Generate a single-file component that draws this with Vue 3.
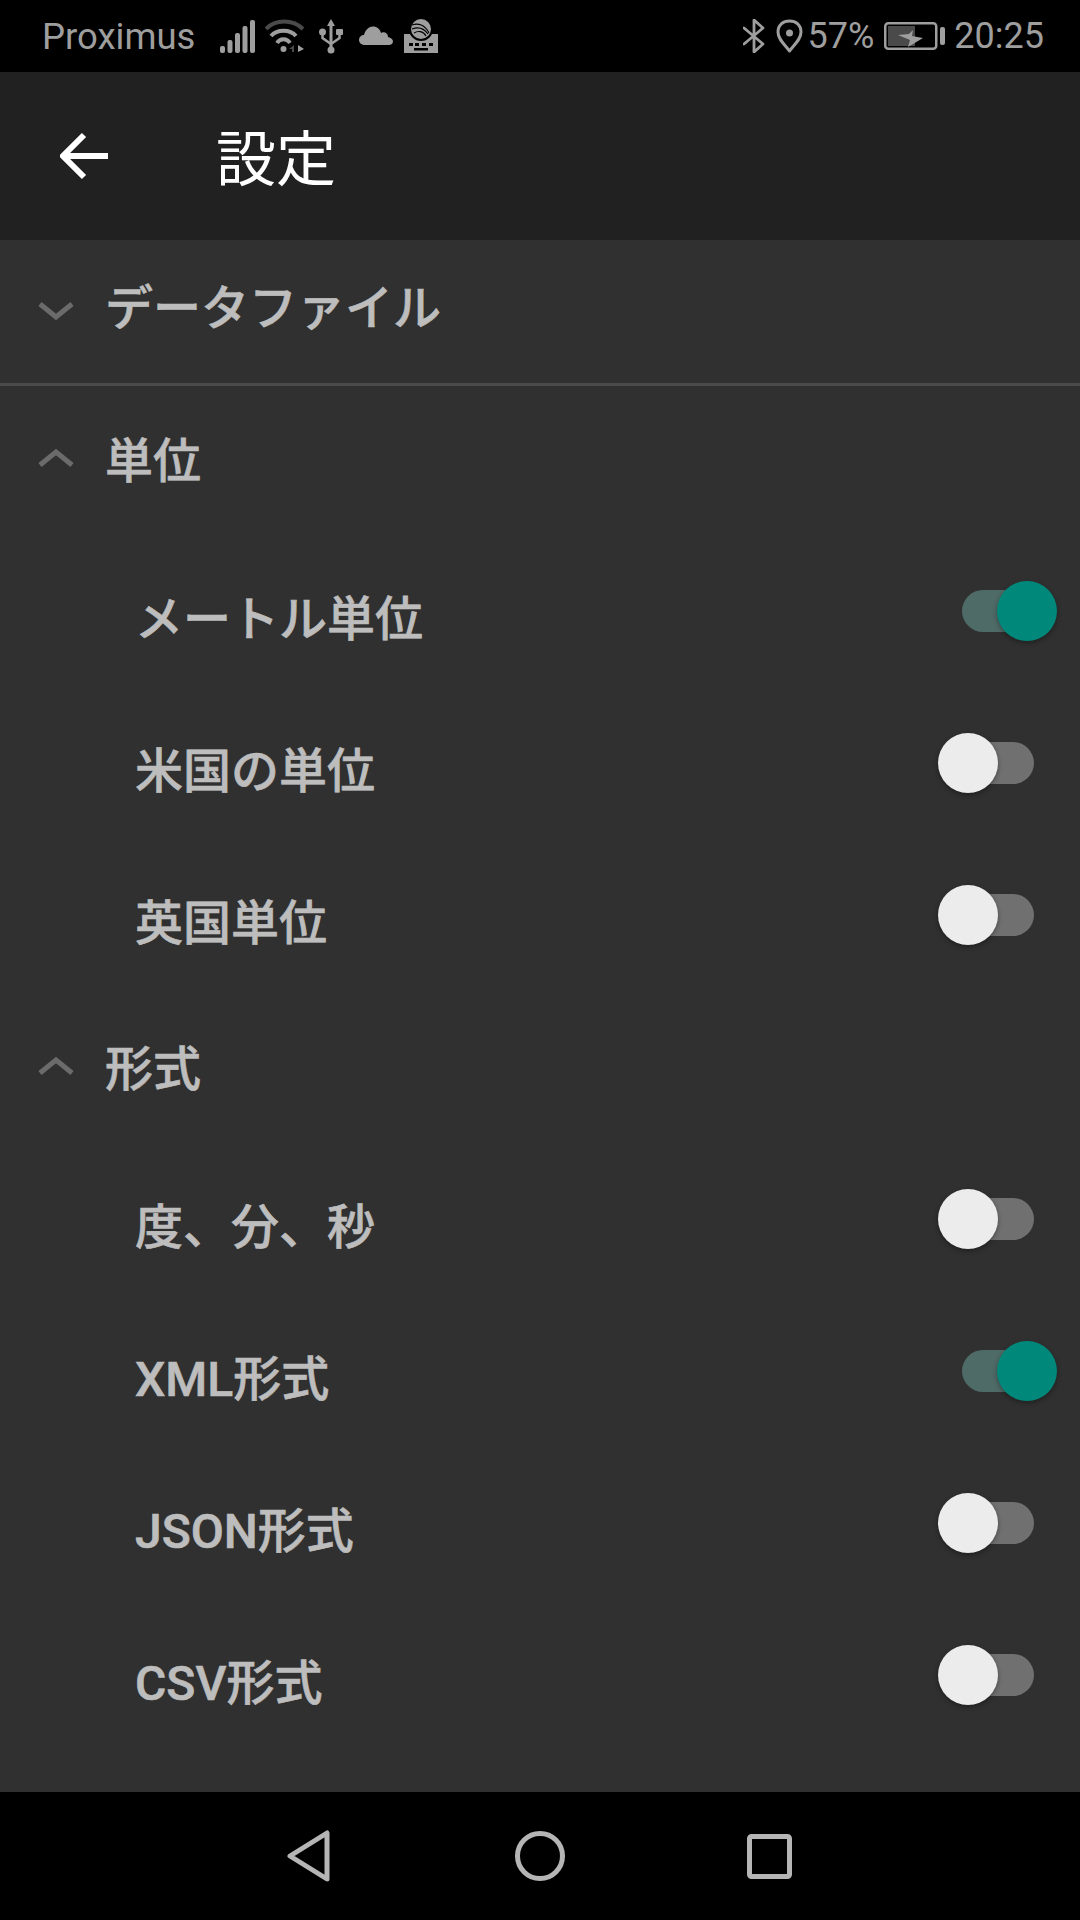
<script setup>
const units = [
  { label: 'メートル単位', on: true },
  { label: '米国の単位', on: false },
  { label: '英国単位', on: false }
]
const formats = [
  { label: '度、分、秒', on: false },
  { label: 'XML形式', on: true },
  { label: 'JSON形式', on: false },
  { label: 'CSV形式', on: false }
]
</script>

<template>
  <div class="screen">
    <div class="status-bar">
      <span class="carrier">Proximus</span>
      <div class="status-icons">
        <svg width="35" height="34" viewBox="0 0 35 34" class="ic-signal">
          <g fill="#9e9e9e">
            <rect x="0" y="27" width="5" height="7" rx="2" />
            <rect x="7.500" y="21" width="5" height="13" rx="2" />
            <rect x="15" y="14" width="5" height="20" rx="2" />
            <rect x="22.500" y="7" width="5" height="27" rx="2" />
            <rect x="30" y="1" width="5" height="33" rx="2" />
          </g>
        </svg>
        <svg width="40" height="34" viewBox="0 0 40 34" class="ic-wifi">
          <path d="M1 10 C10 0 28 0 38 10" fill="none" stroke="#4a4a4a" stroke-width="4" />
          <path d="M6 17 C12 10 25 10 31 17" fill="none" stroke="#9e9e9e" stroke-width="4" />
          <path d="M12 24 C15 19 22 19 25 24" fill="none" stroke="#9e9e9e" stroke-width="4" />
          <circle cx="18.500" cy="30" r="3" fill="#9e9e9e" />
          <path d="M29 26 L29 33 L27 33 L27 30 L24 30 Z" fill="#4a4a4a" />
          <path d="M33 26 L39 30 L33 33 Z" fill="#9e9e9e" />
        </svg>
        <svg width="24" height="35" viewBox="0 0 24 35" class="ic-usb">
          <g fill="#9e9e9e">
            <path d="M12 0 L16 7 L13.500 7 L13.500 30 L10.500 30 L10.500 7 L8 7 Z" />
            <circle cx="12" cy="31" r="3.500" />
            <circle cx="3.500" cy="13" r="3.500" />
            <rect x="17" y="10" width="7" height="6" rx="1" />
          </g>
          <path d="M3.500 14 L3.500 19 L12 25 L20.500 19 L20.500 14" fill="none" stroke="#9e9e9e" stroke-width="2.500" />
        </svg>
        <svg width="34" height="20" viewBox="0 0 34 20" class="ic-cloud">
          <path d="M6 19 C2 19 0 16.500 0 14 C0 11 2.500 9 5 9 C6.500 3.500 10 0.500 14 0.500 C18 0.500 21 3 22 7 C23 6 24.500 6 26 6.500 C28 7.500 29 9 29 11 C32 11.500 34 13.500 34 15.500 C34 17.500 32 19 30 19 Z" fill="#9e9e9e" />
        </svg>
        <svg width="34" height="34" viewBox="0 0 34 34" class="ic-swiftkey">
          <rect x="0" y="15" width="34" height="19" fill="#9e9e9e" />
          <circle cx="17" cy="10" r="12" fill="#000" />
          <circle cx="17" cy="10" r="10" fill="#9e9e9e" />
          <path d="M8 6 C14 3.500 21 6 25 14 M8 10 C14 7.500 20 9.500 24 15 M10 14 C14 11.500 19 12 22 17" fill="none" stroke="#000" stroke-width="1.200" />
          <g fill="#000">
            <rect x="5" y="24" width="4" height="3" />
            <rect x="11" y="24" width="4" height="3" />
            <rect x="18" y="24" width="4" height="3" />
            <rect x="25" y="24" width="4" height="3" />
            <rect x="10" y="29" width="14" height="2.500" />
          </g>
        </svg>
      </div>
      <div class="status-right">
        <svg width="22" height="34" viewBox="0 0 22 34" class="ic-bt">
          <path d="M1 9 L20 25 L11 33 L11 1 L20 9 L1 25" fill="none" stroke="#9e9e9e" stroke-width="2.800" stroke-linejoin="round" stroke-linecap="round" />
        </svg>
        <svg width="27" height="34" viewBox="0 0 27 34" class="ic-pin">
          <path d="M13.500 32 C8 25 2 20 2 13 C2 6 7 2 13.500 2 C20 2 25 6 25 13 C25 20 19 25 13.500 32 Z" fill="none" stroke="#9e9e9e" stroke-width="3" stroke-linejoin="round" />
          <circle cx="13.500" cy="14" r="3.500" fill="#9e9e9e" />
        </svg>
        <span class="pct">57%</span>
        <svg width="61" height="28" viewBox="0 0 61 28" class="ic-battery">
          <rect x="1.250" y="1.250" width="51" height="25.500" rx="3" fill="none" stroke="#9e9e9e" stroke-width="2.500" />
          <rect x="4" y="4" width="27" height="20" fill="#4a4a4a" />
          <path d="M14 13 L25 12 L29 8 L28 14 L39 16 L24 25 L26 18 Z" fill="#9e9e9e" />
          <rect x="56" y="5" width="5" height="18" rx="2" fill="#9e9e9e" />
        </svg>
        <span class="time">20:25</span>
      </div>
    </div>

    <header class="app-bar">
      <svg width="48" height="48" viewBox="0 0 48 48" class="back">
        <path d="M48 24 H4 M24 3 L3 24 L24 45" fill="none" stroke="#fff" stroke-width="6" />
      </svg>
      <h1 class="title">設定</h1>
    </header>

    <main class="content">
      <div class="section-head first">
        <svg width="36" height="24" viewBox="0 0 36 24">
          <path d="M2 8 L18 21 L34 8" fill="none" stroke="#6b6b6b" stroke-width="5" />
        </svg>
        <span class="section-label">データファイル</span>
      </div>
      <div class="divider"></div>

      <div class="section-head">
        <svg width="36" height="24" viewBox="0 0 36 24">
          <path d="M2 16 L18 3 L34 16" fill="none" stroke="#6b6b6b" stroke-width="5" />
        </svg>
        <span class="section-label">単位</span>
      </div>
      <div v-for="item in units" :key="item.label" class="row">
        <span class="row-label">{{ item.label }}</span>
        <div class="switch" :class="{ on: item.on }">
          <div class="track"></div>
          <div class="knob"></div>
        </div>
      </div>

      <div class="section-head spaced">
        <svg width="36" height="24" viewBox="0 0 36 24">
          <path d="M2 16 L18 3 L34 16" fill="none" stroke="#6b6b6b" stroke-width="5" />
        </svg>
        <span class="section-label">形式</span>
      </div>
      <div v-for="item in formats" :key="item.label" class="row">
        <span class="row-label">{{ item.label }}</span>
        <div class="switch" :class="{ on: item.on }">
          <div class="track"></div>
          <div class="knob"></div>
        </div>
      </div>
    </main>

    <nav class="nav-bar">
      <svg width="44" height="52" viewBox="0 0 44 52">
        <path d="M3 26 L40 3 L40 49 Z" fill="none" stroke="#b5b5b5" stroke-width="5" stroke-linejoin="round" />
      </svg>
      <svg width="50" height="50" viewBox="0 0 50 50" class="nav-home">
        <circle cx="25" cy="25" r="22.500" fill="none" stroke="#b5b5b5" stroke-width="5" />
      </svg>
      <svg width="45" height="45" viewBox="0 0 45 45" class="nav-recent">
        <rect x="2.500" y="2.500" width="40" height="40" rx="2" fill="none" stroke="#b5b5b5" stroke-width="5" />
      </svg>
    </nav>
  </div>
</template>

<style>
html, body {
  margin: 0;
  background: #000;
}
</style>

<style scoped>
.screen {
  width: 1080px;
  height: 1920px;
  display: flex;
  flex-direction: column;
  overflow: hidden;
  font-family: Roboto, "Noto Sans CJK JP", sans-serif;
}
.status-bar {
  height: 72px;
  flex: none;
  box-sizing: border-box;
  background: #000;
  color: #9e9e9e;
  display: flex;
  align-items: center;
  padding: 0 36px 0 42px;
  font-size: 36.500px;
}
.status-icons {
  display: flex;
  align-items: center;
  margin-left: 25px;
}
.ic-wifi { margin-left: 10px; }
.ic-usb { margin-left: 14px; }
.ic-cloud { margin-left: 16px; }
.ic-swiftkey { margin-left: 11px; }
.status-right {
  margin-left: auto;
  display: flex;
  align-items: center;
  font-size: 36px;
}
.ic-bt { margin-right: 11px; }
.ic-pin { margin-right: 5px; }
.ic-battery { margin: 0 9px 0 10px; }
.app-bar {
  height: 168px;
  flex: none;
  background: #212121;
  display: flex;
  align-items: center;
  padding-left: 60px;
}
.title {
  margin: 0 0 4px 108px;
  font-size: 60px;
  font-weight: 400;
  color: #fff;
}
.content {
  flex: 1;
  background: #303030;
}
.section-head {
  height: 149px;
  box-sizing: border-box;
  display: flex;
  align-items: center;
  padding-left: 38px;
}
.section-head.first {
  height: 143px;
  padding-bottom: 7px;
}
.section-head.spaced {
  height: 152px;
  padding-top: 4px;
}
.section-label {
  margin: 0 0 8px 31px;
}
.section-label, .row-label {
  font-size: 48px;
  font-weight: 500;
  -webkit-text-stroke: 0.6px #bdbdbd;
  color: #bdbdbd;
}
.divider {
  height: 3px;
  background: #4a4a4a;
}
.row {
  height: 152px;
  box-sizing: border-box;
  display: flex;
  align-items: center;
  justify-content: space-between;
  padding: 0 23px 0 135px;
}
.row-label {
  position: relative;
  top: 4px;
}
.switch {
  position: relative;
  width: 119px;
  height: 60px;
}
.track {
  position: absolute;
  left: 24px;
  top: 9px;
  width: 72px;
  height: 42px;
  border-radius: 21px;
  background: #707070;
}
.knob {
  position: absolute;
  left: 0;
  top: 0;
  width: 60px;
  height: 60px;
  border-radius: 50%;
  background: #ececec;
  box-shadow: 0 2px 5px rgba(0, 0, 0, 0.35);
}
.switch.on .track {
  background: #4f6b67;
}
.switch.on .knob {
  left: 59px;
  background: #00897b;
}
.nav-bar {
  height: 128px;
  flex: none;
  background: #000;
  display: flex;
  align-items: center;
  padding-left: 287px;
}
.nav-home { margin-left: 184px; }
.nav-recent { margin-left: 182px; }
</style>
